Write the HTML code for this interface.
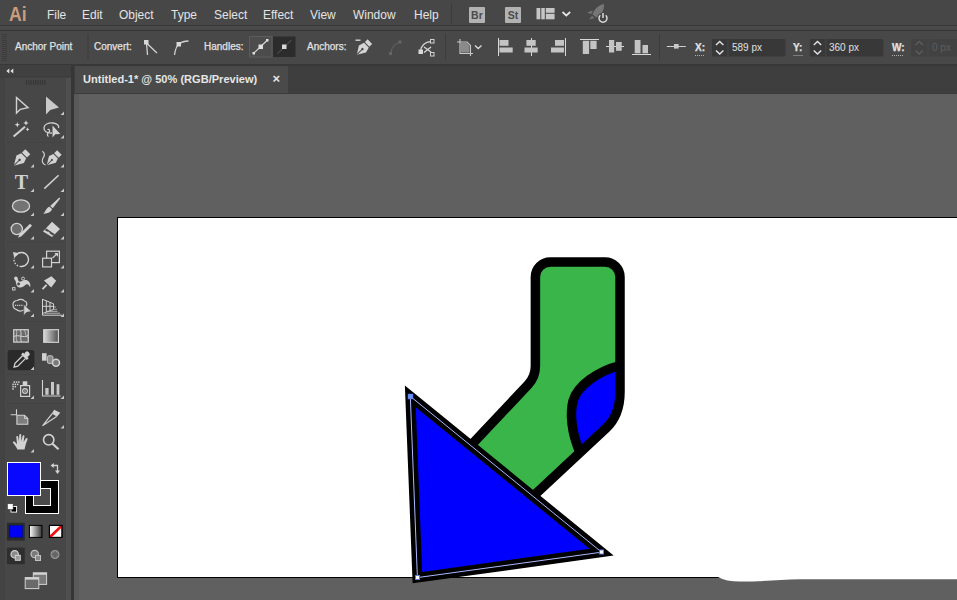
<!DOCTYPE html>
<html lang="en">
<head>
<meta charset="utf-8">
<title>Untitled-1* @ 50% (RGB/Preview)</title>
<style>
html,body{margin:0;padding:0;}
body{width:957px;height:600px;overflow:hidden;background:#606060;font-family:"Liberation Sans",sans-serif;position:relative;color:#dcdcdc;}
.abs{position:absolute;}
#menubar{left:0;top:0;width:957px;height:30px;background:#474747;}
#mline1{left:0;top:25px;width:957px;height:1px;background:#383838;}
#mstrip{left:0;top:26px;width:957px;height:3px;background:#4a4a4a;}
#mline2{left:0;top:29.5px;width:957px;height:1.5px;background:#363636;}
#ctrlbar{left:0;top:31px;width:957px;height:32.5px;background:#484848;}
#strip{left:0;top:63.5px;width:957px;height:3px;background:#383838;}
#tabbar{left:74px;top:66px;width:883px;height:27px;background:#3e3e3e;}
#tab{left:75px;top:66px;width:213px;height:27px;background:#4a4a4a;}
#tabline{left:74px;top:93px;width:883px;height:1px;background:#3a3a3a;}
#canvas{left:74px;top:94px;width:883px;height:506px;background:#606060;overflow:hidden;}
#toolbar{left:0;top:66px;width:71px;height:534px;background:#474747;}
#tbhead{left:0;top:65px;width:71px;height:12px;background:#404040;}
#tbedge{left:71px;top:66px;width:3px;height:534px;background:#363636;}
#tbedge0{left:65.500px;top:78px;width:5.500px;height:522px;background:#4f4f4f;}
#tbedge2{left:74px;top:94px;width:4.500px;height:506px;background:#595959;}
.menu{top:7px;font-size:13px;color:#e4e4e4;white-space:nowrap;line-height:15px;transform:scaleX(0.92);transform-origin:0 0;}
.lbl{top:41px;font-size:10px;color:#e2e2e2;-webkit-text-stroke:0.25px #e2e2e2;white-space:nowrap;line-height:13px;transform-origin:0 0;}
.val{top:41px;font-size:10px;color:#e0e0e0;white-space:nowrap;line-height:13px;}
.sq{width:16.500px;height:16px;background:#b2b2b2;color:#4a4a4a;font-size:10.500px;font-weight:bold;line-height:16px;text-align:center;border-radius:1px;}
svg{position:absolute;overflow:visible;}
</style>
</head>
<body>
<div id="menubar" class="abs"></div>
<div id="mline1" class="abs"></div><div id="mstrip" class="abs"></div><div id="mline2" class="abs"></div>
<div id="ctrlbar" class="abs"></div>
<div id="strip" class="abs"></div>
<div id="tabbar" class="abs"></div>
<div id="tab" class="abs"></div>
<div id="tabline" class="abs"></div>
<div id="canvas" class="abs"></div>

<!-- ARTWORK -->
<svg id="art" class="abs" style="left:0;top:0" width="957" height="600" viewBox="0 0 957 600">
  <rect x="117.5" y="217.5" width="860" height="360" fill="#ffffff" stroke="#000" stroke-width="1"/>
  <path d="M718 570 H957 V579.300 H800 C780 579.500 765 581.600 740 581.600 Q726 581.500 718 577 Z" fill="#ffffff"/>
  <!-- sock -->
  <path id="sock" d="M550.4 262 H605 A15 15 0 0 1 620 277 V392 Q620 415.200 606 428.300 L516 512.200 L447 470.800 L528 384.700 Q535.400 377 535.400 366 V277 A15 15 0 0 1 550.400 262 Z" fill="#39b54a"/>
  <path d="M620 365.500 C598 371 577 386 573 401 C570 413 571 432 580 452.500 L606 428.300 Q620 415.200 620 392 Z" fill="#0000ff"/>
  <path d="M620 365.500 C598 371 577 386 573 401 C570 413 571 432 580 452.500" fill="none" stroke="#000" stroke-width="9.5"/>
  <path d="M550.4 262 H605 A15 15 0 0 1 620 277 V392 Q620 415.200 606 428.300 L516 512.200 L447 470.800 L528 384.700 Q535.400 377 535.400 366 V277 A15 15 0 0 1 550.400 262 Z" fill="none" stroke="#000" stroke-width="9.5" stroke-linejoin="round"/>
  <!-- triangle -->
  <path d="M410.3 396.3 L601.6 552.2 L417.4 577.6 Z" fill="#0000ff" stroke="#000" stroke-width="10" stroke-miterlimit="10"/>
  <path d="M410.3 396.3 L601.6 552.2 L417.4 577.6 Z" fill="none" stroke="#aab8ff" stroke-width="1"/>
  <rect x="408" y="394" width="5" height="5" fill="#6f8ff5" stroke="#4a6fe0" stroke-width="0.5"/>
  <rect x="599.5" y="550" width="4" height="4" fill="#fff" stroke="#5a7ae8" stroke-width="1"/>
  <rect x="415.5" y="575.5" width="4" height="4" fill="#fff" stroke="#5a7ae8" stroke-width="1"/>
</svg>

<div id="toolbar" class="abs"></div>
<div id="tbhead" class="abs"></div>
<div class="abs" style="left:0;top:78px;width:5px;height:522px;background:#434343"></div>
<div id="tbedge0" class="abs"></div><div id="tbedge" class="abs"></div><div id="tbedge2" class="abs"></div>
<!-- MENU -->
<div class="abs" id="ailogo" style="left:9px;top:2px;font-size:21px;line-height:24px;font-weight:bold;color:#c99c7e;transform:scaleX(0.84);transform-origin:0 0;">Ai</div>
<div class="abs menu" style="left:47px">File</div>
<div class="abs menu" style="left:82px">Edit</div>
<div class="abs menu" style="left:119px">Object</div>
<div class="abs menu" style="left:171px">Type</div>
<div class="abs menu" style="left:214px">Select</div>
<div class="abs menu" style="left:263px">Effect</div>
<div class="abs menu" style="left:310px">View</div>
<div class="abs menu" style="left:353px">Window</div>
<div class="abs menu" style="left:414px">Help</div>
<div class="abs" style="left:451px;top:3px;width:1px;height:21px;background:#3c3c3c"></div>
<div class="abs sq" style="left:468.700px;top:7px;">Br</div>
<div class="abs sq" style="left:504.700px;top:7px;">St</div>
<svg id="mbicons" class="abs" style="left:0;top:0" width="957" height="30" viewBox="0 0 957 30">
  <g fill="#c6c6c6">
    <rect x="536.500" y="8" width="3.800" height="11.300"/><rect x="541.300" y="8" width="3.500" height="11.300"/>
    <rect x="545.800" y="8" width="8.800" height="4.800"/><rect x="545.800" y="13.800" width="8.800" height="5.500"/>
  </g>
  <path d="M562.500 12 L566.300 15.500 L570.200 12" stroke="#e4e4e4" stroke-width="1.700" fill="none"/>
  <!-- rocket dim -->
  <g fill="#767676">
    <path d="M604 4 C599 5 594 9 592.500 14.500 L596.500 17.500 C601 15.500 604.500 10 604 4 Z"/>
    <path d="M593 10.500 L587 12.500 L591 14 Z"/>
    <path d="M598.500 17 L598.500 22 L601.500 17.500 Z"/>
    <path d="M592 16 L589 19.500 L594.500 18 Z"/>
  </g>
  <circle cx="603" cy="18" r="5.600" fill="#444"/>
  <path d="M600.300 15.300 A4 4 0 1 0 605.700 15.300" stroke="#dcdcdc" stroke-width="1.500" fill="none"/>
  <path d="M603 13 V18" stroke="#dcdcdc" stroke-width="1.500"/>
</svg>
<div class="abs" id="tabtxt" style="left:83px;top:72.4px;font-size:11px;line-height:15px;font-weight:bold;color:#e6e6e6;white-space:nowrap;transform-origin:0 0;transform:scaleX(1.005);">Untitled-1* @ 50% (RGB/Preview)</div>
<div class="abs" id="tabx" style="left:272.500px;top:70.500px;font-size:13px;line-height:15px;font-weight:bold;color:#e6e6e6;">×</div>
<!-- CONTROL -->
<svg id="ctl" class="abs" style="left:0;top:0" width="957" height="66" viewBox="0 0 957 66">
  <!-- gripper -->
  <g fill="#3c3c3c">
    <rect x="2" y="34" width="5" height="1"/>
    <rect x="2" y="36" width="5" height="1"/>
    <rect x="2" y="38" width="5" height="1"/>
    <rect x="2" y="40" width="5" height="1"/>
    <rect x="2" y="42" width="5" height="1"/>
    <rect x="2" y="44" width="5" height="1"/>
    <rect x="2" y="46" width="5" height="1"/>
    <rect x="2" y="48" width="5" height="1"/>
    <rect x="2" y="50" width="5" height="1"/>
    <rect x="2" y="52" width="5" height="1"/>
    <rect x="2" y="54" width="5" height="1"/>
    <rect x="2" y="56" width="5" height="1"/>
    <rect x="2" y="58" width="5" height="1"/>
    <rect x="2" y="60" width="5" height="1"/>
  </g>
  <rect x="87.5" y="34" width="1" height="26" fill="#3c3c3c"/>
  <rect x="445" y="34" width="1" height="26" fill="#3c3c3c"/>
  <rect x="659" y="34" width="1" height="26" fill="#3c3c3c"/>
  <!-- convert corner -->
  <g stroke="#d0d0d0" stroke-width="1.3" fill="none">
    <path d="M146.5 43 L147.5 55 M146.5 43 L157 53"/>
  </g>
  <rect x="144" y="40" width="4.5" height="4.5" fill="#d8d8d8"/>
  <!-- convert smooth -->
  <path d="M174.5 55 C175.5 48 177 45 179.5 44 C182 41.5 185 41 188.5 41" stroke="#d0d0d0" stroke-width="1.3" fill="none"/>
  <rect x="176.5" y="42" width="4.5" height="4.5" fill="#d8d8d8"/>
  <!-- handles buttons -->
  <rect x="249.5" y="36.5" width="22.5" height="20.5" fill="#4c4c4c" stroke="#5c5c5c" stroke-width="1"/>
  <path d="M253.5 53.5 L267.5 40" stroke="#d8d8d8" stroke-width="1.2"/>
  <rect x="258.5" y="44.5" width="4.5" height="4.5" fill="#e0e0e0"/>
  <rect x="252.5" y="52" width="2.5" height="2.5" fill="#e0e0e0"/><rect x="266" y="39" width="2.5" height="2.5" fill="#e0e0e0"/>
  <rect x="273" y="36.5" width="22.5" height="20.5" fill="#2c2c2c"/>
  <path d="M277.5 53.5 L291.5 40" stroke="#4a4a4a" stroke-width="1.2"/>
  <rect x="282" y="44.5" width="4.5" height="4.5" fill="#d8d8d8"/>
  <!-- remove anchor pen -->
  <g transform="translate(363.5 48) rotate(45)">
    <path d="M-3.2 -9 H3.2 V-5 L5 1.5 L0 9.5 L-5 1.5 L-3.2 -5 Z" fill="#d4d4d4"/>
    <path d="M-3.6 -4.6 H3.6" stroke="#484848" stroke-width="1"/>
    <path d="M0 9 V2" stroke="#484848" stroke-width="1"/>
    <circle cx="0" cy="1.5" r="1.2" fill="#484848"/>
  </g>
  <rect x="355.5" y="39.5" width="5" height="1.4" fill="#d4d4d4"/>
  <!-- connect (dim) -->
  <path d="M390.5 53.5 C391.5 47 394 44 400 42" stroke="#606060" stroke-width="1.3" fill="none"/>
  <rect x="389" y="52" width="3" height="3" fill="#646464"/><rect x="398.5" y="40.5" width="3" height="3" fill="#646464"/>
  <!-- cut path -->
  <path d="M420.5 51 C421.5 45 425 42 431 41.5" stroke="#d0d0d0" stroke-width="1.3" fill="none"/>
  <rect x="418.5" y="49.5" width="4.5" height="4.5" fill="#d8d8d8"/>
  <rect x="430.5" y="39.5" width="3.5" height="3.5" fill="none" stroke="#d0d0d0" stroke-width="1"/>
  <rect x="430.500" y="52.500" width="3.5" height="3.500" fill="none" stroke="#d0d0d0" stroke-width="1"/>
  <path d="M424 47 L431 52 M424 52.500 L431 47" stroke="#d8d8d8" stroke-width="1.3"/>
  <!-- crop/isolate -->
  <path d="M460 39 V53.500 H473 M457 42 H467 L470.500 45.500 V56" stroke="#c8c8c8" stroke-width="1.100" fill="none"/>
  <path d="M461 43 H466.500 L469.500 46 V52.500 H461 Z" fill="#8a8a8a"/>
  <path d="M475 45.500 L478.200 48.500 L481.500 45.500" stroke="#d8d8d8" stroke-width="1.400" fill="none"/>
  <!-- align icons -->
  <g fill="#c4c4c4">
    <rect x="498" y="38" width="1" height="18" fill="#d8d8d8"/>
    <rect x="499.500" y="40" width="9" height="5.800"/><rect x="499.500" y="47.500" width="13.200" height="5"/>
    <rect x="531" y="38" width="1" height="18" fill="#d8d8d8"/>
    <rect x="526.400" y="40" width="9.300" height="5.800"/><rect x="524.500" y="47.500" width="13.200" height="5"/>
    <rect x="565" y="38" width="1" height="18" fill="#d8d8d8"/>
    <rect x="555" y="40" width="9" height="5.800"/><rect x="551" y="47.500" width="13" height="5"/>
    <rect x="580" y="39" width="19" height="1" fill="#d8d8d8"/>
    <rect x="582.800" y="40.800" width="6.300" height="13.200"/><rect x="590.300" y="40.800" width="6.300" height="8.200"/>
    <rect x="606" y="46" width="18" height="1" fill="#d8d8d8"/>
    <rect x="609" y="40" width="5.200" height="12.500"/><rect x="616" y="42" width="5.700" height="8.800"/>
    <rect x="632" y="54" width="19" height="1" fill="#d8d8d8"/>
    <rect x="634.700" y="40" width="5.800" height="13.300"/><rect x="642.500" y="45" width="5.500" height="8.300"/>
  </g>
  <!-- reference point -->
  <rect x="666.800" y="46" width="19" height="1" fill="#d0d0d0"/>
  <rect x="674" y="44" width="4.600" height="4.600" fill="#c8c8c8"/>
  <!-- inputs -->
  <rect x="712" y="39" width="73.500" height="17.500" rx="1.500" fill="#383838"/>
  <rect x="727.500" y="39" width="1" height="17.500" fill="#484848"/>
  <path d="M716 45 L719.700 41.500 L723.400 45 M716 50.500 L719.700 54 L723.400 50.500" stroke="#e0e0e0" stroke-width="1.500" fill="none"/>
  <rect x="809.800" y="39" width="73.500" height="17.500" rx="1.500" fill="#383838"/>
  <rect x="825.300" y="39" width="1" height="17.500" fill="#484848"/>
  <path d="M813.800 45 L817.500 41.500 L821.200 45 M813.800 50.500 L817.500 54 L821.200 50.500" stroke="#e0e0e0" stroke-width="1.500" fill="none"/>
  <rect x="911" y="39" width="50" height="17.500" rx="1.500" fill="#424242"/>
  <rect x="927.500" y="39" width="1" height="17.500" fill="#484848"/>
  <path d="M915.500 45 L919.200 41.500 L922.900 45 M915.500 50.500 L919.200 54 L922.900 50.500" stroke="#5c5c5c" stroke-width="1.500" fill="none"/>
  <!-- dotted underlines -->
  <path d="M695 55.500 H704 M793.500 55.500 H802.500 M892 55.500 H904" stroke="#b0b0b0" stroke-width="1" stroke-dasharray="1 1"/>
</svg>
<div class="abs lbl" style="top:40.400px;left:15px">Anchor Point</div>
<div class="abs lbl" style="top:40.400px;left:94px">Convert:</div>
<div class="abs lbl" style="top:40.400px;left:204px">Handles:</div>
<div class="abs lbl" style="top:40.400px;left:307px">Anchors:</div>
<div class="abs lbl" style="font-weight:bold;left:695px">X:</div>
<div class="abs lbl" style="font-weight:bold;left:793px">Y:</div>
<div class="abs lbl" style="font-weight:bold;left:892px">W:</div>
<div class="abs val" style="left:732px">589 px</div>
<div class="abs val" style="left:829px">360 px</div>
<div class="abs val" style="left:932px;color:#5e5e5e">0 px</div>
<!-- TOOLS -->
<svg id="tools" class="abs" style="left:0;top:0" width="76" height="600" viewBox="0 0 76 600">
  <!-- header arrows -->
  <path d="M9.300 68.600 L6.300 71 L9.300 73.400 Z M13.300 68.600 L10.300 71 L13.300 73.400 Z" fill="#e0e0e0"/>
  <rect x="0" y="76.500" width="70" height="1" fill="#3a3a3a"/>
  <!-- gripper -->
  <g fill="#343434">
    <rect x="26" y="80" width="1" height="5"/><rect x="28.300" y="80" width="1" height="5"/><rect x="30.600" y="80" width="1" height="5"/>
    <rect x="32.900" y="80" width="1" height="5"/><rect x="35.200" y="80" width="1" height="5"/><rect x="37.500" y="80" width="1" height="5"/>
    <rect x="39.800" y="80" width="1" height="5"/><rect x="42.100" y="80" width="1" height="5"/><rect x="44.400" y="80" width="1" height="5"/>
  </g>
  <!-- group separators -->
  <g fill="#434343">
    <rect x="6" y="142" width="58" height="1"/><rect x="6" y="242" width="58" height="1"/>
    <rect x="6" y="321" width="58" height="1"/><rect x="6" y="374" width="58" height="1"/><rect x="6" y="403" width="58" height="1"/>
  </g>
  <!-- flyout triangles -->
  <g fill="#c8c8c8">
    <path d="M64 111.500 V115 H60.500 Z"/>
    <path d="M64 135 V138.500 H60.500 Z"/>
    <path d="M34 164 V167.500 H30.500 Z"/><path d="M64 164 V167.500 H60.500 Z"/>
    <path d="M34 188.500 V192 H30.500 Z"/><path d="M64 188.500 V192 H60.500 Z"/>
    <path d="M34 212.500 V216 H30.500 Z"/><path d="M64 212.500 V216 H60.500 Z"/>
    <path d="M34 236 V239.500 H30.500 Z"/><path d="M64 236 V239.500 H60.500 Z"/>
    <path d="M34 265 V268.500 H30.500 Z"/><path d="M64 265 V268.500 H60.500 Z"/>
    <path d="M34 289 V292.500 H30.500 Z"/><path d="M64 289 V292.500 H60.500 Z"/>
    <path d="M34 313.500 V317 H30.500 Z"/><path d="M64 313.500 V317 H60.500 Z"/>
    <path d="M34 366 V369.500 H30.500 Z"/>
    <path d="M34 395.500 V399 H30.500 Z"/><path d="M64 395.500 V399 H60.500 Z"/>
    <path d="M64 425 V428.500 H60.500 Z"/>
    <path d="M34 449 V452.500 H30.500 Z"/>
  </g>
  <!-- 1 selection (hollow) -->
  <path d="M16.500 97.500 V113 L20.300 109.300 L28 107.600 Z" fill="none" stroke="#d2d2d2" stroke-width="1.400" stroke-linejoin="miter"/>
  <!-- 2 direct selection (filled) -->
  <path d="M46 96.500 V114.500 L50.300 110 L59 107.500 Z" fill="#cacaca"/>
  <!-- 3 magic wand -->
  <path d="M13.600 136.600 L25 126.800" stroke="#d2d2d2" stroke-width="2"/>
  <g fill="#d8d8d8">
    <path d="M17.300 122 L18 124 L20 124.700 L18 125.400 L17.300 127.400 L16.600 125.400 L14.600 124.700 L16.600 124 Z"/>
    <path d="M26 120.200 L26.800 122.200 L28.800 123 L26.800 123.800 L26 125.800 L25.200 123.800 L23.200 123 L25.200 122.200 Z"/>
    <path d="M27.500 127.300 L28.100 128.700 L29.500 129.300 L28.100 129.900 L27.500 131.300 L26.900 129.900 L25.500 129.300 L26.900 128.700 Z"/>
  </g>
  <!-- 4 lasso -->
  <path d="M52 133 C47 133.500 43.500 131 44 127.500 C44.500 124 49 122.500 53 123 C57 123.500 59.500 125.500 58.500 128" fill="none" stroke="#d2d2d2" stroke-width="1.300"/>
  <path d="M47.500 129.500 C49.500 129 50.500 131 49 132 C47.500 133 46.500 135 48.500 136.500" fill="none" stroke="#d2d2d2" stroke-width="1.200"/>
  <path d="M52.500 125.500 V137.500 L55.300 134.300 L60.300 134 Z" fill="#d2d2d2"/>
  <!-- 5 pen -->
  <g transform="translate(21.200 158.300) rotate(45) scale(1.1)">
    <path d="M0 9.500 L-4.800 1.300 L-3.200 -3.200 H3.200 L4.800 1.300 Z" fill="#d2d2d2"/>
    <rect x="-3.200" y="-8.500" width="6.400" height="4.300" fill="#d2d2d2"/>
    <path d="M0 9.500 V2.500" stroke="#484848" stroke-width="0.900"/>
    <circle cx="0" cy="2" r="1.100" fill="#484848"/>
  </g>
  <!-- 6 curvature -->
  <g transform="translate(53.400 158.500) rotate(45) scale(1.06)">
    <path d="M0 9 L-4.500 1.300 L-3 -3 H3 L4.500 1.300 Z" fill="#d2d2d2"/>
    <rect x="-3" y="-8" width="6" height="4" fill="#d2d2d2"/>
    <path d="M0 9 V2.500" stroke="#484848" stroke-width="0.900"/>
    <circle cx="0" cy="2" r="1" fill="#484848"/>
  </g>
  <path d="M42.300 151.300 C45.500 153 44.500 156 42.800 158.500 C41.500 161 42.500 164 45.500 165" fill="none" stroke="#d2d2d2" stroke-width="1.200"/>
  <!-- 7 type -->
  <text x="21.300" y="188.700" font-family="'Liberation Serif',serif" font-size="20" font-weight="bold" text-anchor="middle" fill="#d0d0d0">T</text>
  <!-- 8 line -->
  <path d="M44.300 188.600 L58.600 175.200" stroke="#d2d2d2" stroke-width="1.500"/>
  <!-- 9 ellipse -->
  <ellipse cx="21" cy="206" rx="8.600" ry="6.200" fill="#747474" stroke="#d2d2d2" stroke-width="1.300"/>
  <!-- 10 brush -->
  <path d="M59.300 197.500 L60.200 198.400 L52.800 208.300 L50.200 206 Z" fill="#d2d2d2"/>
  <path d="M49.500 206.800 L52 209 C51.500 212 47.500 213.500 43.200 213.800 C45.500 212.500 45.500 208 49.500 206.800 Z" fill="#d2d2d2"/>
  <!-- 11 shaper -->
  <circle cx="16.800" cy="229" r="5.600" fill="#6c6c6c" stroke="#d2d2d2" stroke-width="1.300"/>
  <path d="M30 223.800 L32 225.800 L21.500 236.300 L18 237.800 L19.500 234.300 Z" fill="#d2d2d2"/>
  <!-- 12 eraser -->
  <path d="M52 221.800 L60 229 L52 237 L43 231.500 Z" fill="#d2d2d2"/>
  <path d="M46.300 228.600 L54.800 234.300 L53.300 235.800 L44.800 230.100 Z" fill="#484848"/>
  <path d="M47.500 231.800 L49.300 233" stroke="#d2d2d2" stroke-width="1.300"/>
  <!-- 13 rotate -->
  <path d="M15.600 255.600 A7 7 0 1 1 21 266.500" fill="none" stroke="#d2d2d2" stroke-width="1.400"/>
  <path d="M21 266.500 A7 7 0 0 1 14.200 257.800" fill="none" stroke="#d2d2d2" stroke-width="1.400" stroke-dasharray="1.500 1.500"/>
  <path d="M13 252 L18.800 253.300 L14.300 258 Z" fill="#d2d2d2"/>
  <!-- 14 scale -->
  <rect x="46.600" y="251.200" width="12.800" height="11.400" fill="none" stroke="#d2d2d2" stroke-width="1.200"/>
  <rect x="42.600" y="258.200" width="8.900" height="8.700" fill="#484848" stroke="#d2d2d2" stroke-width="1.200"/>
  <path d="M52.500 258 L57 253.800" stroke="#d2d2d2" stroke-width="1.200"/>
  <path d="M54.300 253 H58 V256.700 Z" fill="#d2d2d2"/>
  <!-- 15 width/warp -->
  <path d="M14.300 277.400 C15.500 275.800 17.600 276.500 17.800 278.800 C18 281.500 19.500 282.300 22 281 C24.500 279.600 27.500 279.800 29 281.800 C30.600 284 30.600 286 30 287.300 C29 285 27.800 283.600 26 284.600 C24 286 22 288.300 18.600 287.300 C15.800 286.300 16.400 282.500 15.300 280.600 C14.600 279.300 13.600 278.600 14.300 277.400 Z" fill="#d2d2d2"/>
  <circle cx="23" cy="278.600" r="1.500" fill="#484848" stroke="#d2d2d2" stroke-width="0.900"/>
  <circle cx="18.600" cy="284" r="1.400" fill="#484848"/>
  <rect x="12.600" y="287.600" width="2.400" height="2.400" fill="#484848" stroke="#d2d2d2" stroke-width="0.900"/>
  <!-- 16 pin -->
  <path d="M44 280.600 L51.400 276.200 L56.200 280.800 L51.200 287.600 Z" fill="#d2d2d2"/>
  <path d="M46.600 284.800 L42.500 289.200" stroke="#d2d2d2" stroke-width="1.800"/>
  <!-- 17 shape builder -->
  <path d="M13 305 C12.500 301.500 15.500 300.500 17.500 300.500 C19 299 23 299 24.500 301 C27 301.500 27.500 304.500 26 306 L24 310 C21 311.500 18 311 16.500 309.500 C14 309 13.200 307 13 305 Z" fill="none" stroke="#d2d2d2" stroke-width="1.200"/>
  <path d="M15 305.400 H23" stroke="#d2d2d2" stroke-width="1.200" stroke-dasharray="1.200 0.900"/>
  <path d="M23.800 304.500 V315.500 L26.600 312.300 L31.300 311.500 Z" fill="#d2d2d2" stroke="#484848" stroke-width="0.600"/>
  <!-- 18 perspective grid -->
  <g stroke="#d2d2d2" stroke-width="1" fill="none">
    <path d="M42.500 299 V315.200 H62"/>
    <path d="M42.500 299.300 L53.500 303.800 V309.500 L42.500 313.500"/>
    <path d="M46.300 300.800 V312 M50 302.300 V310.800 M42.500 306.300 H53.500"/>
    <path d="M47 311.300 H57.500 M45 313.200 H60" stroke-width="0.800"/>
    <path d="M53.500 307 H56 M53.500 309.300 H57" stroke-width="0.700"/>
  </g>
  <!-- 19 mesh -->
  <rect x="13.700" y="329.700" width="14.600" height="12.400" fill="#6a6a6a" stroke="#d2d2d2" stroke-width="1.200"/>
  <g stroke="#d2d2d2" stroke-width="1" fill="none">
    <path d="M20 330 C22.500 333 19.500 338 21.500 342"/>
    <path d="M14 336.500 C18 334 24 338.500 28 335.500"/>
    <path d="M24.500 330 C26 333 25 336 28 338" stroke-width="0.700"/>
    <path d="M16.500 330 C17.500 333 15 337 17 342" stroke-width="0.700"/>
  </g>
  <!-- 20 gradient -->
  <linearGradient id="gr1" x1="0" x2="1" y1="0" y2="0"><stop offset="0" stop-color="#dcdcdc"/><stop offset="1" stop-color="#4e4e4e"/></linearGradient>
  <rect x="43.700" y="329.700" width="14.700" height="12.600" fill="url(#gr1)" stroke="#cfcfcf" stroke-width="1.200"/>
  <!-- 21 eyedropper selected -->
  <rect x="7.600" y="350" width="26.800" height="20.300" rx="2.500" fill="#2a2a2a"/>
  <path d="M34 366.500 V370 H30.500 Z" fill="#c8c8c8"/>
  <g transform="translate(21 360.200) rotate(45)">
    <rect x="-2.500" y="-11" width="5" height="5" rx="2" fill="#d2d2d2"/>
    <rect x="-4" y="-6.800" width="8" height="2.600" fill="#d2d2d2"/>
    <path d="M-2 -4.200 V6.500 L0 9.800 L2 6.500 V-4.200" fill="none" stroke="#d2d2d2" stroke-width="1.300"/>
  </g>
  <!-- 22 blend -->
  <rect x="42" y="353.200" width="4.600" height="7.500" fill="#d2d2d2"/>
  <rect x="47.400" y="355.800" width="5.600" height="7.600" rx="1.500" fill="#8a8a8a" stroke="#c6c6c6" stroke-width="1"/>
  <circle cx="56" cy="362.800" r="3.500" fill="#7a7a7a" stroke="#d2d2d2" stroke-width="1.500"/>
  <!-- 23 symbol sprayer -->
  <g fill="#d2d2d2">
    <rect x="13.500" y="381.300" width="1.500" height="1.500"/><rect x="15.800" y="381.300" width="1.500" height="1.500"/><rect x="18.100" y="381.300" width="1.500" height="1.500"/>
    <rect x="12.300" y="383.600" width="1.500" height="1.500"/><rect x="14.600" y="383.600" width="1.500" height="1.500"/><rect x="16.900" y="383.600" width="1.500" height="1.500"/>
    <rect x="12.300" y="385.900" width="1.500" height="1.500"/><rect x="14.600" y="385.900" width="1.500" height="1.500"/>
    <rect x="12.300" y="388.200" width="1.500" height="1.500"/>
    <rect x="22.700" y="381.300" width="4.600" height="4"/>
  </g>
  <rect x="20.600" y="385.600" width="9" height="10.800" fill="#484848" stroke="#d2d2d2" stroke-width="1.200"/>
  <circle cx="25" cy="391" r="2.400" fill="none" stroke="#d2d2d2" stroke-width="1.200"/>
  <circle cx="25" cy="391" r="0.800" fill="#d2d2d2"/>
  <!-- 24 column graph -->
  <path d="M42.500 380 V396 H60.700" fill="none" stroke="#d2d2d2" stroke-width="1.100"/>
  <g fill="#c6c6c6"><rect x="45.300" y="388" width="3.300" height="6.800"/><rect x="51" y="382" width="3" height="12.800"/><rect x="56.600" y="384.200" width="2.800" height="10.600"/></g>
  <!-- 25 artboard -->
  <path d="M10.700 414.700 H17 M16.500 409.300 V415" stroke="#d2d2d2" stroke-width="1.100" fill="none"/>
  <path d="M16.900 415.200 H24.500 L27.800 418.500 V424.200 H16.900 Z" fill="#7e7e7e" stroke="#d2d2d2" stroke-width="1.100"/>
  <path d="M24.500 415.200 V418.500 H27.800" fill="none" stroke="#d2d2d2" stroke-width="0.900"/>
  <!-- 26 slice -->
  <path d="M54.200 409.800 L60.200 412.800 L57 416.800 L51.800 413.600 Z" fill="#d2d2d2"/>
  <path d="M52.200 413.600 L42.500 425.800 L56.600 416.600" fill="none" stroke="#d2d2d2" stroke-width="1.200" stroke-linejoin="miter"/>
  <!-- 27 hand -->
  <path d="M17.500 449.500 C16 447 14.500 444.500 13 442.800 C12.500 441.600 14 441 15 442 L17 444.300 L16.300 437 C16.200 435.600 18 435.500 18.200 436.900 L18.900 441.500 L19.300 435 C19.400 433.600 21.200 433.700 21.200 435 L21.300 441.500 L22.600 436 C22.900 434.700 24.600 435.100 24.400 436.400 L23.600 442 L25.800 438.600 C26.500 437.500 28 438.300 27.500 439.500 C26.300 442.500 25.500 445 24.500 449.500 Z" fill="#d2d2d2"/>
  <!-- 28 zoom -->
  <circle cx="48.700" cy="439.800" r="5.200" fill="none" stroke="#d2d2d2" stroke-width="1.600"/>
  <path d="M52.500 443.800 L58.500 449.300" stroke="#d2d2d2" stroke-width="2.200"/>
  <!-- swap arrows -->
  <g fill="none" stroke="#d2d2d2" stroke-width="1.300">
    <path d="M53 465.500 H57.500 V471"/>
  </g>
  <path d="M50.500 465.500 L53.800 463 V468 Z M57.500 474 L55 470.500 H60 Z" fill="#d2d2d2"/>
  <!-- stroke swatch -->
  <rect x="25.500" y="480.500" width="33" height="33" fill="#000" stroke="#fff" stroke-width="1"/>
  <rect x="33.500" y="488.500" width="17" height="17" fill="#4a4a4a" stroke="#fff" stroke-width="1"/>
  <!-- fill swatch -->
  <rect x="7.500" y="462.500" width="33" height="33" fill="#0808ff" stroke="#fff" stroke-width="1"/>
  <!-- default mini -->
  <rect x="11" y="506.500" width="5.600" height="5.600" fill="#000" stroke="#fff" stroke-width="0.900"/>
  <rect x="7.500" y="503.800" width="5.600" height="5.600" fill="#fff" stroke="#333" stroke-width="0.500"/>
  <!-- color / gradient / none -->
  <rect x="7" y="522.800" width="17.800" height="17.800" fill="#2a2a2a"/>
  <rect x="9.300" y="525.600" width="13.300" height="11.600" fill="#0000f5" stroke="#00108a" stroke-width="0.800"/>
  <linearGradient id="gr2" x1="0" x2="1" y1="0" y2="0"><stop offset="0" stop-color="#ffffff"/><stop offset="1" stop-color="#333"/></linearGradient>
  <rect x="29.400" y="525.400" width="12.600" height="12" fill="url(#gr2)" stroke="#000" stroke-width="1"/>
  <rect x="49.400" y="525.400" width="12.600" height="12" fill="#fff" stroke="#000" stroke-width="1"/>
  <path d="M50 537 L61.500 526" stroke="#ee1111" stroke-width="2.600"/>
  <rect x="49.400" y="525.400" width="12.600" height="12" fill="none" stroke="#000" stroke-width="1"/>
  <!-- draw modes -->
  <rect x="7" y="547.600" width="17.800" height="16.600" fill="#2e2e2e"/>
  <circle cx="14.700" cy="554.300" r="3.700" fill="#8a8a8a" stroke="#d2d2d2" stroke-width="1.200"/>
  <rect x="15.300" y="555.300" width="5" height="5" fill="#9a9a9a" stroke="#d2d2d2" stroke-width="1"/>
  <circle cx="34.700" cy="554" r="3.700" fill="#7a7a7a" stroke="#c2c2c2" stroke-width="1.200"/>
  <rect x="35.500" y="555.500" width="5" height="5" fill="#8a8a8a" stroke="#c2c2c2" stroke-width="1"/>
  <circle cx="55" cy="554.500" r="3.900" fill="#707070" stroke="#9a9a9a" stroke-width="1.200"/>
  <path d="M55 551 V558 M51.500 554.500 H58.500" stroke="#5a5a5a" stroke-width="0.800"/>
  <!-- screen mode -->
  <rect x="33.300" y="572.800" width="13.300" height="11.600" fill="#7a7a7a" stroke="#d2d2d2" stroke-width="1"/>
  <rect x="33.300" y="572.800" width="13.300" height="2" fill="#d2d2d2"/>
  <rect x="25.200" y="577.600" width="13.600" height="11" fill="#6a6a6a" stroke="#d2d2d2" stroke-width="1"/>
  <rect x="25.200" y="577.600" width="13.600" height="2" fill="#d2d2d2"/>
</svg>
</body>
</html>
